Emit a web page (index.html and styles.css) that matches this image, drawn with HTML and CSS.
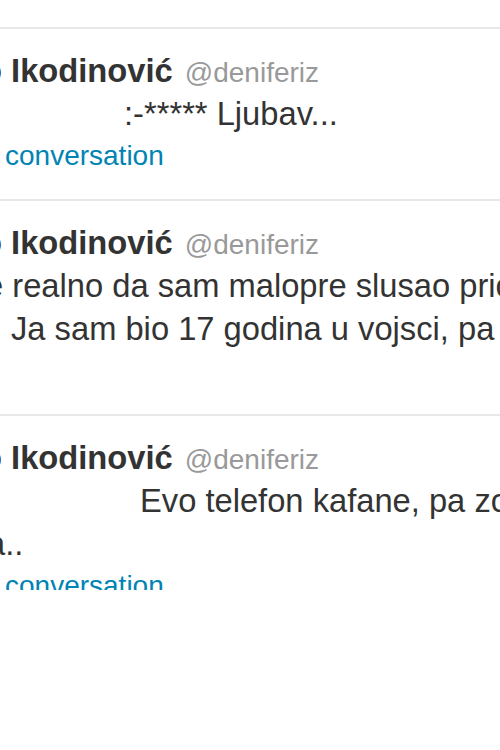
FILE: index.html
```html
<!DOCTYPE html>
<html lang="sr">
<head>
    <meta charset="UTF-8">
    <meta name="viewport" content="width=device-width, initial-scale=1.0">
    <title>Tweets</title>
    <link rel="stylesheet" href="styles.css">
</head>
<body>
    <div class="stream">
        <div class="tweet">
            <div class="tweet-header"><strong class="fullname">o Ikodinović</strong> <span class="username">@deniferiz</span></div>
            <p class="tweet-text indent-smile">:-***** Ljubav...</p>
            <div class="tweet-footer"><a class="details" href="#">conversation</a></div>
        </div>
        <div class="tweet">
            <div class="tweet-header"><strong class="fullname">o Ikodinović</strong> <span class="username">@deniferiz</span></div>
            <p class="tweet-text indent-cut">e realno da sam malopre slusao price</p>
            <p class="tweet-text indent-line">Ja sam bio 17 godina u vojsci, pa</p>
            <div class="tweet-footer"></div>
        </div>
        <div class="tweet">
            <div class="tweet-header"><strong class="fullname">o Ikodinović</strong> <span class="username">@deniferiz</span></div>
            <p class="tweet-text indent-evo">Evo telefon kafane, pa zovi</p>
            <p class="tweet-text indent-dots">a..</p>
            <div class="tweet-footer"><a class="details" href="#">conversation</a></div>
        </div>
    </div>
</body>
</html>
```

FILE: styles.css
```css
html, body {
    margin: 0;
    padding: 0;
    overflow: hidden;
    background-color: #fff;
}
body {
    font-family: "Liberation Sans", Arial, sans-serif;
    color: #333;
}
.stream {
    height: 590px;
    overflow: hidden;
    padding-top: 27px;
    box-sizing: border-box;
}
.tweet {
    border-top: 2px solid #e8e8e8;
    padding: 20px 0 23px;
    margin-left: -17px;
    white-space: nowrap;
}
.tweet-header {
    font-size: 32.7px;
    line-height: 43px;
    height: 43px;
    margin-left: -1px;
}
.fullname {
    font-weight: bold;
    color: #333;
}
.username {
    font-size: 28px;
    line-height: 1;
    color: #999;
    margin-left: 3px;
}
.tweet-text {
    margin: 0;
    font-size: 32.7px;
    line-height: 43px;
}
.indent-smile {
    padding-left: 141px;
}
.indent-cut {
    padding-left: 2px;
}
.indent-line {
    padding-left: 28px;
}
.indent-evo {
    padding-left: 157px;
}
.indent-dots {
    padding-left: 4px;
}
.tweet-footer {
    font-size: 28px;
    line-height: 41px;
    height: 41px;
    padding-left: 22px;
}
.details {
    color: #0084b4;
    text-decoration: none;
}
```
